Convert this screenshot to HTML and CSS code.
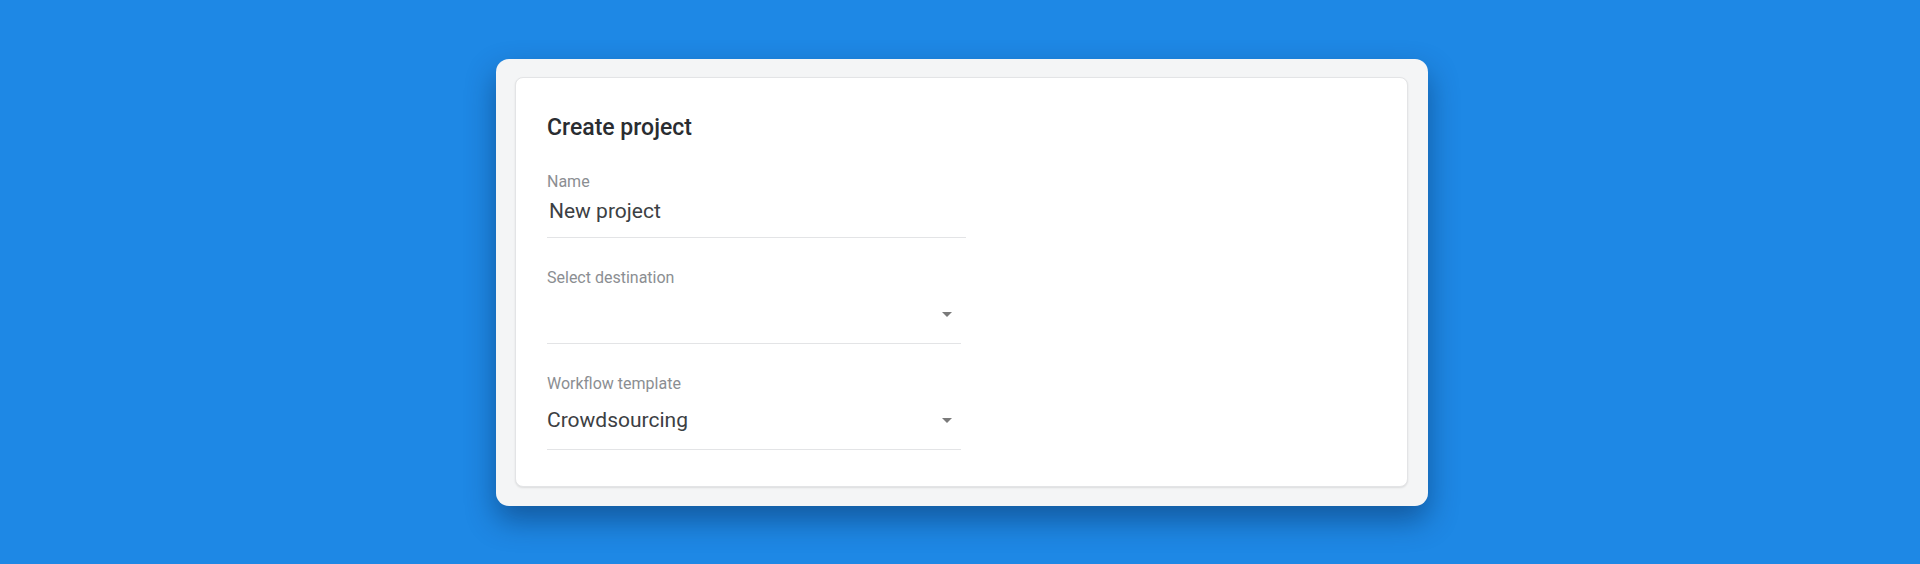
FILE: index.html
```html
<!DOCTYPE html>
<html lang="en">
<head>
    <meta charset="UTF-8">
    <title>Create project</title>
    <link rel="stylesheet" href="styles.css">
</head>
<body>
<div class="page">
    <div class="frame">
        <form class="card" action="">
            <h4 class="card-title">Create project</h4>

            <div class="field">
                <label class="field-label" for="name">Name</label>
                <div class="field-row field-row--text">
                    <input type="text" id="name" class="field-input" value="New project">
                </div>
            </div>

            <div class="field field--select">
                <span class="field-label">Select destination</span>
                <div class="field-row field-row--select">
                    <span class="field-value"></span>
                    <svg class="caret" width="10" height="5" viewBox="0 0 10 5"><path d="M0 0h10L5 5z"/></svg>
                </div>
            </div>

            <div class="field field--select">
                <span class="field-label">Workflow template</span>
                <div class="field-row field-row--select">
                    <span class="field-value">Crowdsourcing</span>
                    <svg class="caret" width="10" height="5" viewBox="0 0 10 5"><path d="M0 0h10L5 5z"/></svg>
                </div>
            </div>
        </form>
    </div>
</div>
</body>
</html>
```

FILE: styles.css
```css
* {
    box-sizing: border-box;
    font-family: Roboto, "Noto Sans", sans-serif;
}
html, body {
    margin: 0;
    height: 100%;
}
body {
    background-color: #1e88e5;
}
.page {
    display: flex;
    justify-content: center;
    padding: 59px 0 0 4px;
}
.frame {
    width: 932px;
    padding: 18px 20px 19px 19px;
    background-color: #f4f5f6;
    border-radius: 13px;
    box-shadow: 0 14px 30px rgba(5, 30, 70, 0.45);
}
.card {
    margin: 0;
    padding: 36px 32px 36px 31px;
    background-color: #fff;
    border: 1px solid #e3e4e6;
    border-radius: 8px;
    box-shadow: 0 1px 2px rgba(0, 0, 0, 0.1);
}
.card-title {
    margin: 0;
    font-size: 23px;
    line-height: 28px;
    font-weight: 500;
    color: #2a2d31;
}
.field {
    margin-top: 30px;
    width: 419px;
}
.field--select {
    width: 414px;
}
.field-label {
    display: block;
    font-size: 16px;
    line-height: 20px;
    color: #8b8e92;
}
.field-row {
    border-bottom: 1px solid #e3e4e6;
}
.field-row--text {
    padding: 5px 0 12px 2px;
}
.field-input {
    display: block;
    width: 100%;
    padding: 0;
    border: none;
    outline: none;
    background: none;
    font-size: 21px;
    line-height: 28px;
    height: 28px;
    color: #3c4043;
}
.field-row--select {
    display: flex;
    align-items: center;
    justify-content: space-between;
    height: 56px;
    padding: 12px 9px 15px 0;
}
.field-value {
    font-size: 21px;
    line-height: 28px;
    color: #3c4043;
}
.caret {
    flex-shrink: 0;
    fill: #7a7a7a;
}
```
